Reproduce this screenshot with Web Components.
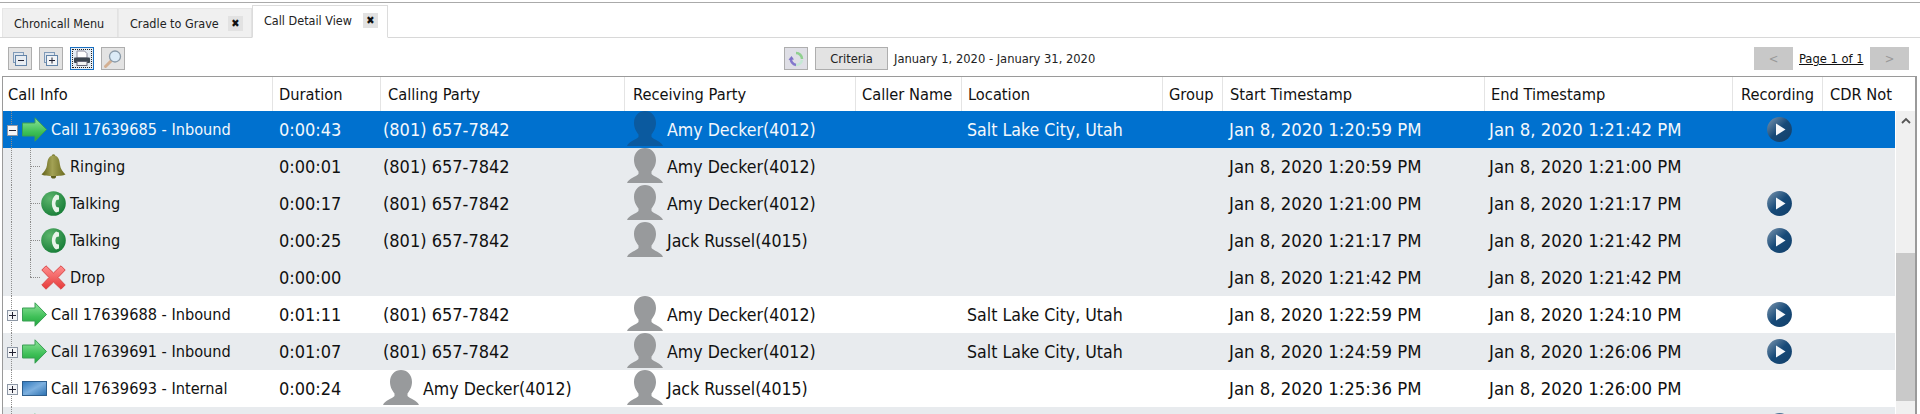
<!DOCTYPE html>
<html>
<head>
<meta charset="utf-8">
<style>
  html, body { margin: 0; padding: 0; height: 414px; overflow: hidden; background: #fff; }
  body { font-family: "DejaVu Sans", "Liberation Sans", sans-serif; font-stretch: condensed; color: #111; }
</style>
</head>
<body>
<app-shell>
  <tab-strip>
    <tab-item style="width:116px">Chronicall Menu</tab-item>
    <tab-item style="width:134px" closable>Cradle to Grave</tab-item>
    <tab-item style="width:136px" closable active>Call Detail View</tab-item>
  </tab-strip>
  <tool-bar></tool-bar>
  <call-grid>
    <call-row kind="arrow" tree="minus" selected info="Call 17639685 - Inbound" duration="0:00:43" calling="(801) 657-7842" receiving="Amy Decker(4012)" location="Salt Lake City, Utah" start="Jan 8, 2020 1:20:59 PM" end="Jan 8, 2020 1:21:42 PM" play></call-row>
    <call-row kind="bell" child shade info="Ringing" duration="0:00:01" calling="(801) 657-7842" receiving="Amy Decker(4012)" start="Jan 8, 2020 1:20:59 PM" end="Jan 8, 2020 1:21:00 PM"></call-row>
    <call-row kind="phone" child shade info="Talking" duration="0:00:17" calling="(801) 657-7842" receiving="Amy Decker(4012)" start="Jan 8, 2020 1:21:00 PM" end="Jan 8, 2020 1:21:17 PM" play></call-row>
    <call-row kind="phone" child shade info="Talking" duration="0:00:25" calling="(801) 657-7842" receiving="Jack Russel(4015)" start="Jan 8, 2020 1:21:17 PM" end="Jan 8, 2020 1:21:42 PM" play></call-row>
    <call-row kind="drop" child="last" shade info="Drop" duration="0:00:00" start="Jan 8, 2020 1:21:42 PM" end="Jan 8, 2020 1:21:42 PM"></call-row>
    <call-row kind="arrow" tree="plus" info="Call 17639688 - Inbound" duration="0:01:11" calling="(801) 657-7842" receiving="Amy Decker(4012)" location="Salt Lake City, Utah" start="Jan 8, 2020 1:22:59 PM" end="Jan 8, 2020 1:24:10 PM" play></call-row>
    <call-row kind="arrow" tree="plus" shade info="Call 17639691 - Inbound" duration="0:01:07" calling="(801) 657-7842" receiving="Amy Decker(4012)" location="Salt Lake City, Utah" start="Jan 8, 2020 1:24:59 PM" end="Jan 8, 2020 1:26:06 PM" play></call-row>
    <call-row kind="internal" tree="plus" info="Call 17639693 - Internal" duration="0:00:24" calling-person="Amy Decker(4012)" receiving="Jack Russel(4015)" start="Jan 8, 2020 1:25:36 PM" end="Jan 8, 2020 1:26:00 PM"></call-row>
    <call-row kind="arrow" tree="plus" shade play></call-row>
  </call-grid>
</app-shell>

<script>
const COLUMNS = "270px 108px 244px 231px 106px 201px 60px 262px 248px 90px 72px";

const ICONS = {
  arrow: `<svg width="25" height="25" viewBox="0 0 25 25">
    <defs><linearGradient id="g" x1="0" y1="0" x2="0" y2="1"><stop offset="0" stop-color="#8ee39a"/><stop offset=".6" stop-color="#3fc058"/><stop offset="1" stop-color="#1fa63c"/></linearGradient></defs>
    <path d="M.5 6H13V.8L24.500 12.500 13 24.200V19H.500Z" fill="url(#g)" stroke="#3a9f55"/></svg>`,
  internal: `<svg width="25" height="15" viewBox="0 0 25 15">
    <defs><linearGradient id="b" x1="0" y1="0" x2="1" y2="1"><stop offset="0" stop-color="#2f78bd"/><stop offset=".5" stop-color="#7db0df"/><stop offset="1" stop-color="#2a6fb0"/></linearGradient></defs>
    <rect x=".5" y=".5" width="24" height="14" fill="url(#b)" stroke="#2e5f8e"/></svg>`,
  bell: `<svg width="25" height="25" viewBox="0 0 25 25">
    <defs><linearGradient id="b" x1="0" y1="0" x2="1" y2="0"><stop offset="0" stop-color="#5f5f18"/><stop offset=".45" stop-color="#a3a255"/><stop offset="1" stop-color="#6a6a1e"/></linearGradient></defs>
    <circle cx="12.500" cy="22" r="2.600" fill="#5f5f1c"/><circle cx="12.500" cy="2" r="1.800" fill="#77772e"/>
    <path d="M12.500 1.500C7.500 1.500 6.500 6 6 11 5.600 15 3 18 .5 20.500 4 22.500 21 22.500 24.500 20.500 22 18 19.400 15 19 11 18.500 6 17.500 1.500 12.500 1.500Z" fill="url(#b)"/></svg>`,
  phone: `<svg width="25" height="25" viewBox="0 0 25 25">
    <defs><radialGradient id="p" cx=".35" cy=".3" r=".8"><stop offset="0" stop-color="#5cb56c"/><stop offset="1" stop-color="#137a34"/></radialGradient></defs>
    <circle cx="12.500" cy="12.500" r="12.300" fill="url(#p)"/>
    <path d="M15 3.500 18 4.500 18 8.500 15.500 9C14 11 14 14 15.500 16L18 16.500 18 20.500 15 21.500C10 18 9 8 15 3.500Z" fill="#e8f4ea"/></svg>`,
  drop: `<svg width="25" height="25" viewBox="0 0 25 25">
    <defs><linearGradient id="x" x1="0" y1="0" x2="0" y2="1"><stop offset="0" stop-color="#ff8f8f"/><stop offset="1" stop-color="#e63a3a"/></linearGradient></defs>
    <path d="M5 .8 12.500 8 20 .8 24.200 5 17 12.500 24.200 20 20 24.200 12.500 17 5 24.200 .8 20 8 12.500 .8 5Z" fill="url(#x)" stroke="#d94a4a"/></svg>`
};

class TabStrip extends HTMLElement {
  constructor() {
    super();
    this.attachShadow({ mode: "open" }).innerHTML = `
    <style>
      :host { display: flex; align-items: flex-end; height: 34px; margin-top: 2px; padding-left: 2px;
        border-top: 1px solid #aaa; border-bottom: 1px solid #d8d8d8; box-sizing: content-box; }
    </style>
    <slot></slot>`;
  }
}

class TabItem extends HTMLElement {
  constructor() {
    super();
    const closable = this.hasAttribute("closable");
    this.attachShadow({ mode: "open" }).innerHTML = `
    <style>
      :host { display: flex; align-items: center; box-sizing: border-box; height: 29px; padding: 0 8px 0 11px;
        background: #f0f0f0; border-right: 1px solid #e2e2e2; border-top: 1px solid #e6e6e6;
        border-left: 1px solid #e6e6e6; font-size: 12.5px; color: #222; }
      :host([active]) { height: 33px; background: #fff; margin-bottom: -1px; padding: 0 9px 3px 11px;
        border: 1px solid #dcdcdc; border-bottom: 1px solid #fff; }
      .close { width: 15px; height: 15px; margin-left: auto; background: #e2e2e2; color: #111; font-size: 11px;
        font-weight: bold; display: flex; align-items: center; justify-content: center; }
    </style>
    <slot></slot>${closable ? `<span class="close">&#x2716;</span>` : ""}`;
  }
}

class ToolButton extends HTMLElement {
  constructor() {
    super();
    this.attachShadow({ mode: "open" }).innerHTML = `
    <style>
      :host { display: flex; align-items: center; justify-content: center; box-sizing: border-box; width: 24px; height: 23px;
        background: #e3e3e3; border: 1px solid #aeaeae; font-size: 12.8px; color: #222; }
      :host([focused]) { border: 1px solid #1a6fc0; outline: 1px dotted #222; outline-offset: -3px; background: #e6edf4; }
      :host([wide]) { width: 73px; }
      :host([pager]) { width: 39px; background: #c8c8c8; border-color: #c8c8c8; color: #999; }
    </style>
    <slot></slot>`;
  }
}

class ToolBar extends HTMLElement {
  constructor() {
    super();
    this.attachShadow({ mode: "open" }).innerHTML = `
    <style>
      :host { display: flex; align-items: center; height: 23px; padding: 9px 11px 6px 8px; font-size: 12.8px; color: #222; }
      .group { display: flex; align-items: center; gap: 7px; }
      .left { width: 776px; }
      .range { margin-left: -1px; }
      .pager { margin-left: auto; gap: 6px; }
      u { color: #111; width: 65px; white-space: nowrap; }
    </style>
    <div class="group left">
      <tool-button><svg width="16" height="16" viewBox="0 0 16 16"><rect x="1.500" y="1.500" width="10" height="10" fill="#dfe6ee" stroke="#7f9ab8"/><rect x="3.500" y="4.500" width="11" height="10" fill="#e8edf2" stroke="#6384a8"/><path d="M6 9.500h6" stroke="#223"/></svg></tool-button>
      <tool-button><svg width="16" height="16" viewBox="0 0 16 16"><rect x="1.500" y="1.500" width="10" height="10" fill="#dfe6ee" stroke="#7f9ab8"/><rect x="3.500" y="4.500" width="11" height="10" fill="#f2f4f6" stroke="#6384a8"/><path d="M6 9.500h6M9 6.500v6" stroke="#223"/></svg></tool-button>
      <tool-button focused><svg width="18" height="17" viewBox="0 0 18 17"><path d="M4 8V1h7.500L14 3.500V8Z" fill="#fff" stroke="#889"/><rect x="1" y="7.500" width="16" height="5.500" rx="1" fill="#3d4650"/><rect x="4" y="11.500" width="10" height="4" fill="#f4f4f4" stroke="#667"/></svg></tool-button>
      <tool-button><svg width="20" height="20" viewBox="0 0 20 20"><path d="M2.500 17.500 8 12" stroke="#d4b092" stroke-width="3" stroke-linecap="round"/><circle cx="12" cy="7.500" r="5.500" fill="#dcebf7" stroke="#8a9aa8" stroke-width="1.300"/></svg></tool-button>
    </div>
    <div class="group">
      <tool-button style="background:#dfdfe6"><svg width="18" height="18" viewBox="0 0 18 18" fill="none"><path d="M9 3A6 6 0 0 1 15 9" stroke="#8fd08f" stroke-width="2.500"/><path d="M15 10A6 6 0 0 1 9 15" stroke="#c4e8d4" stroke-width="2.500"/><path d="M9 15A6 6 0 0 1 4 8" stroke="#8378cc" stroke-width="2.500"/><path d="M1.500 10 4.500 6 7 9.500Z" fill="#7c70c8"/></svg></tool-button>
      <tool-button wide>Criteria</tool-button>
      <span class="range">January 1, 2020 - January 31, 2020</span>
    </div>
    <div class="group pager">
      <tool-button pager>&lt;</tool-button>
      <u>Page 1 of 1</u>
      <tool-button pager>&gt;</tool-button>
    </div>`;
  }
}

class CallIcon extends HTMLElement {
  constructor() {
    super();
    this.attachShadow({ mode: "open" });
  }
  connectedCallback() {
    this.shadowRoot.innerHTML = `
    <style>:host { display: flex; align-items: center; justify-content: center; width: 25px; height: 25px; flex: none; }</style>
    ${ICONS[this.getAttribute("name")]}`;
  }
}

class PersonIcon extends HTMLElement {
  constructor() {
    super();
    this.attachShadow({ mode: "open" }).innerHTML = `
    <style>:host { display: block; width: 36px; height: 37px; flex: none; color: #989a9c; }
      :host([dark]) { color: #0b5a9f; }
      svg { display: block; }</style>
    <svg width="36" height="37" viewBox="0 0 36 37"><path fill="currentColor" d="M18 0C24 0 29 4.500 29 12C29 17 26.500 21 24.500 23.500V26C27 29 34 30 36 35H0C2 30 9 29 11.500 26V23.500C9.500 21 7 17 7 12C7 4.500 12 0 18 0Z"/></svg>`;
  }
}

class PlayButton extends HTMLElement {
  constructor() {
    super();
    this.attachShadow({ mode: "open" }).innerHTML = `
    <style>:host { display: block; width: 25px; height: 25px; } svg { display: block; }</style>
    <svg width="25" height="25" viewBox="0 0 25 25">
      <defs><linearGradient id="pl" x1="0" y1="0" x2="1" y2="1"><stop offset="0" stop-color="#7f98b0"/><stop offset=".5" stop-color="#174a78"/><stop offset="1" stop-color="#123f69"/></linearGradient></defs>
      <circle cx="12.500" cy="12.500" r="12.400" fill="url(#pl)"/><path d="M9 6.500 18.500 12.500 9 18.500Z" fill="#f6f8fa"/>
    </svg>`;
  }
}

class CallRow extends HTMLElement {
  constructor() {
    super();
    this.attachShadow({ mode: "open" });
  }
  connectedCallback() {
    const a = (n) => this.getAttribute(n) || "";
    const selected = this.hasAttribute("selected");
    const tree = a("tree");
    const child = this.getAttribute("child");
    const dark = selected ? "dark" : "";
    const person = (text) => text ? `<person-icon ${dark}></person-icon><span class="who">${text}</span>` : "";
    const box = tree ? `<span class="box ${tree}"></span>` : "";
    this.shadowRoot.innerHTML = `
    <style>
      :host { display: grid; grid-template-columns: ${COLUMNS}; height: 37px; font-size: 18px; background: #fff; color: #111; overflow: hidden; }
      :host([shade]) { background: #e8ebee; }
      :host([selected]) { background: #0071cf; color: #f4f8fc; }
      .cell { display: flex; align-items: center; white-space: nowrap; overflow: hidden; position: relative; }
      .info { font-size: 16.2px; padding-left: ${tree ? 19 : 38}px; gap: 4px; overflow: visible; }
      /* tree connector lines sit over the first cell */
      .line { position: absolute; border-color: #8c8c8c; border-style: dotted; border-width: 0; }
      .trunk { left: 8px; top: 0; bottom: 0; border-left-width: 1px; }
      .sub { left: 27px; top: 0; height: ${child === "last" ? 18 : 37}px; border-left-width: 1px; }
      .stub { left: 27px; top: 18px; width: 10px; border-top-width: 1px; }
      .box { position: absolute; left: 4px; top: 14px; width: 9px; height: 9px; border: 1px solid #8d97a5; background: #f4f5f7; z-index: 1; }
      .box:before { content: ""; position: absolute; left: 1px; right: 1px; top: 4px; height: 1px; background: #223; }
      .box.plus:after { content: ""; position: absolute; top: 1px; bottom: 1px; left: 4px; width: 1px; background: #223; }
      .who { margin-left: 4px; font-size: 17.6px; }
      .duration { padding-left: 6px; }
      .calling { padding-left: 2px; }
      .receiving { padding-left: 2px; }
      .location { padding-left: 5px; font-size: 17.6px; }
      .start { padding-left: 6px; font-size: 18.4px; }
      .end { padding-left: 4px; font-size: 18.4px; }
      .rec { justify-content: center; padding-left: 3px; }
    </style>
    <div class="cell info">
      <span class="line trunk"></span>
      ${child !== null ? `<span class="line sub"></span><span class="line stub"></span>` : ""}
      ${box}
      <call-icon name="${a("kind")}"></call-icon>
      <span>${a("info")}</span>
    </div>
    <div class="cell duration">${a("duration")}</div>
    <div class="cell calling">${a("calling-person") ? person(a("calling-person")) : `<span>${a("calling")}</span>`}</div>
    <div class="cell receiving">${person(a("receiving"))}</div>
    <div class="cell"></div>
    <div class="cell location">${a("location")}</div>
    <div class="cell"></div>
    <div class="cell start">${a("start")}</div>
    <div class="cell end">${a("end")}</div>
    <div class="cell rec">${this.hasAttribute("play") ? "<play-button></play-button>" : ""}</div>
    <div class="cell"></div>`;
  }
}

class CallGrid extends HTMLElement {
  constructor() {
    super();
    const heads = ["Call Info", "Duration", "Calling Party", "Receiving Party", "Caller Name", "Location", "Group", "Start Timestamp", "End Timestamp", "Recording", "CDR Not"];
    this.attachShadow({ mode: "open" }).innerHTML = `
    <style>
      :host { display: block; box-sizing: border-box; width: 1915px; height: 338px; margin-left: 2px;
        border: 1px solid #9a9a9a; border-bottom: 0; border-width: 1px 2px 0 1px; overflow: hidden; }
      .head { display: grid; grid-template-columns: ${COLUMNS}; width: 1893px; height: 34px; font-size: 16.3px; color: #111; }
      .head div { display: flex; align-items: center; padding-left: 7px; white-space: nowrap; overflow: hidden; border-right: 1px solid #e4e4e4; box-sizing: border-box; }
      .head div:first-child { padding-left: 5px; }
      .head div:nth-child(2), .head div:nth-child(5), .head div:nth-child(6), .head div:nth-child(7), .head div:nth-child(9) { padding-left: 6px; }
      .head div:nth-child(4), .head div:nth-child(10) { padding-left: 8px; }
      .head div:last-child { border-right: 0; }
      .body { display: flex; height: 304px; }
      .rows { width: 1892px; flex: none; }
      .scroll { width: 20px; margin-left: 1px; background: #f0f0f0; display: flex; flex-direction: column; }
      .up { height: 142px; display: flex; justify-content: center; padding-top: 6px; box-sizing: border-box; }
      .thumb { height: 148px; background: #c9c9c9; }
    </style>
    <div class="head">${heads.map((h) => `<div>${h}</div>`).join("")}</div>
    <div class="body">
      <div class="rows"><slot></slot></div>
      <div class="scroll">
        <div class="up"><svg width="10" height="7" viewBox="0 0 10 7"><path d="M1 6 5 2 9 6" fill="none" stroke="#555" stroke-width="1.800"/></svg></div>
        <div class="thumb"></div>
      </div>
    </div>`;
  }
}

class AppShell extends HTMLElement {
  constructor() {
    super();
    this.attachShadow({ mode: "open" }).innerHTML = `
    <style>:host { display: block; width: 1920px; height: 414px; overflow: hidden; }</style>
    <slot></slot>`;
  }
}

customElements.define("tab-strip", TabStrip);
customElements.define("tab-item", TabItem);
customElements.define("tool-button", ToolButton);
customElements.define("tool-bar", ToolBar);
customElements.define("call-icon", CallIcon);
customElements.define("person-icon", PersonIcon);
customElements.define("play-button", PlayButton);
customElements.define("call-row", CallRow);
customElements.define("call-grid", CallGrid);
customElements.define("app-shell", AppShell);
</script>
</body>
</html>
